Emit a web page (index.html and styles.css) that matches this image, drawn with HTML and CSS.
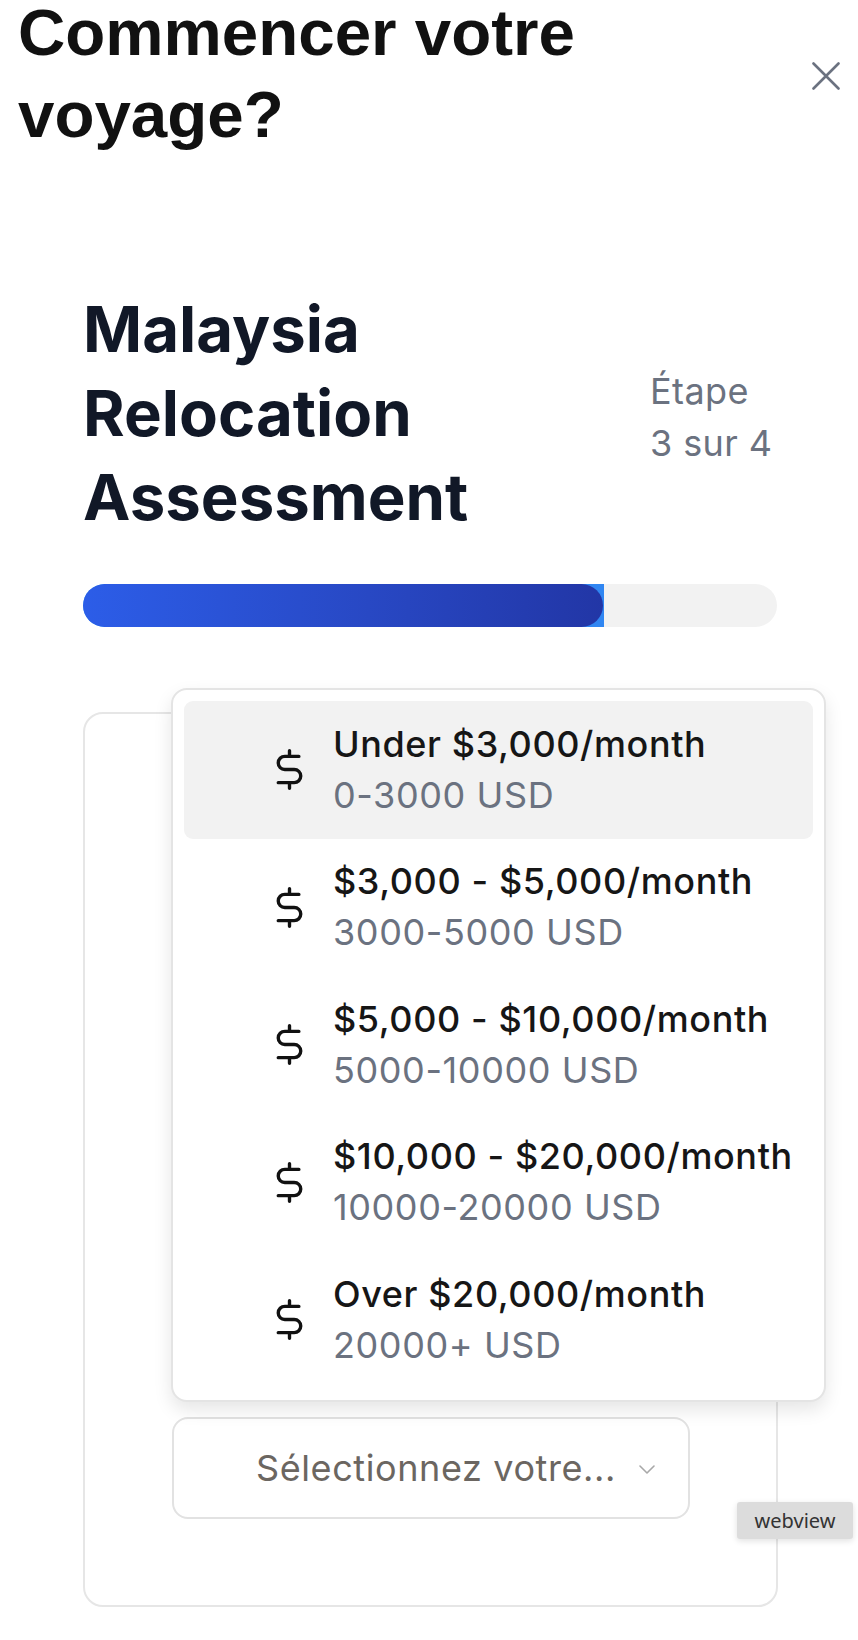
FILE: index.html
```html
<!DOCTYPE html>
<html lang="fr">
<head>
<meta charset="utf-8">
<title>Commencer votre voyage?</title>
<link rel="stylesheet" href="styles.css">
</head>
<body>
<header class="top">
  <h1 class="top-title">Commencer votre voyage?</h1>
  <button class="close" aria-label="Fermer">
    <svg width="28" height="28" viewBox="0 0 28 28" fill="none" stroke="currentColor" stroke-width="2.6" stroke-linecap="round"><path d="M1.5 1.5L26.5 26.5M26.5 1.5L1.5 26.5"/></svg>
  </button>
</header>

<main class="main">
  <div class="head-row">
    <h2 class="assess-title">Malaysia Relocation Assessment</h2>
    <div class="step"><span class="step-line">Étape</span><span class="step-line">3 sur 4</span></div>
  </div>

  <div class="track"><div class="fill" style="width:75%"><div class="fill-inner"></div></div></div>

  <section class="card">
    <div class="dropdown">
      <div class="opt is-active">
        <svg class="dollar" viewBox="0 0 24 24" fill="none" stroke="currentColor" stroke-width="1.8" stroke-linecap="round" stroke-linejoin="round"><path d="M12 2v3M12 19v3M17 5H9.5a3.5 3.5 0 0 0 0 7h5a3.5 3.5 0 0 1 0 7H6"/></svg>
        <div class="opt-text"><div class="opt-label">Under $3,000/month</div><div class="opt-sub">0-3000 USD</div></div>
      </div>
      <div class="opt">
        <svg class="dollar" viewBox="0 0 24 24" fill="none" stroke="currentColor" stroke-width="1.8" stroke-linecap="round" stroke-linejoin="round"><path d="M12 2v3M12 19v3M17 5H9.5a3.5 3.5 0 0 0 0 7h5a3.5 3.5 0 0 1 0 7H6"/></svg>
        <div class="opt-text"><div class="opt-label">$3,000 - $5,000/month</div><div class="opt-sub">3000-5000 USD</div></div>
      </div>
      <div class="opt">
        <svg class="dollar" viewBox="0 0 24 24" fill="none" stroke="currentColor" stroke-width="1.8" stroke-linecap="round" stroke-linejoin="round"><path d="M12 2v3M12 19v3M17 5H9.5a3.5 3.5 0 0 0 0 7h5a3.5 3.5 0 0 1 0 7H6"/></svg>
        <div class="opt-text"><div class="opt-label">$5,000 - $10,000/month</div><div class="opt-sub">5000-10000 USD</div></div>
      </div>
      <div class="opt">
        <svg class="dollar" viewBox="0 0 24 24" fill="none" stroke="currentColor" stroke-width="1.8" stroke-linecap="round" stroke-linejoin="round"><path d="M12 2v3M12 19v3M17 5H9.5a3.5 3.5 0 0 0 0 7h5a3.5 3.5 0 0 1 0 7H6"/></svg>
        <div class="opt-text"><div class="opt-label">$10,000 - $20,000/month</div><div class="opt-sub">10000-20000 USD</div></div>
      </div>
      <div class="opt">
        <svg class="dollar" viewBox="0 0 24 24" fill="none" stroke="currentColor" stroke-width="1.8" stroke-linecap="round" stroke-linejoin="round"><path d="M12 2v3M12 19v3M17 5H9.5a3.5 3.5 0 0 0 0 7h5a3.5 3.5 0 0 1 0 7H6"/></svg>
        <div class="opt-text"><div class="opt-label">Over $20,000/month</div><div class="opt-sub">20000+ USD</div></div>
      </div>
    </div>

    <div class="select">
      <span class="select-text">Sélectionnez votre...</span>
      <svg class="chev" width="16" height="9" viewBox="0 0 16 9" fill="none" stroke="currentColor" stroke-width="1.6" stroke-linecap="round" stroke-linejoin="round"><path d="M1 1l7 7 7-7"/></svg>
    </div>
  </section>
</main>

<div class="tag">webview</div>
</body>
</html>
```

FILE: styles.css
```css
* { box-sizing: border-box; }

body {
  margin: 0;
  background: #ffffff;
  font-family: Inter, "Noto Sans", sans-serif;
  position: relative;
  min-height: 1640px;
  overflow: hidden;
}

.top {
  display: flex;
  align-items: center;
  justify-content: space-between;
  padding: 0 18px 0 18px;
  margin-top: -8px;
}

.top-title {
  margin: 0;
  max-width: 610px;
  font-family: "Liberation Sans", Arial, sans-serif;
  font-weight: 700;
  font-size: 65.5px;
  line-height: 82px;
  color: #111111;
}

.close {
  border: 0;
  background: none;
  padding: 0;
  margin-top: 4px;
  color: #6b7280;
  display: flex;
}

.main {
  margin-left: 83px;
  width: 695px;
  padding-top: 131px;
}

.head-row {
  display: flex;
  align-items: center;
  justify-content: space-between;
}

.assess-title {
  margin: 0;
  max-width: 540px;
  font-weight: 700;
  font-size: 63.5px;
  line-height: 84px;
  color: #111827;
}

.step {
  display: flex;
  flex-direction: column;
  flex: none;
  margin: 7px 4px 0 0;
  width: 124px;
  white-space: nowrap;
  font-size: 36px;
  line-height: 52px;
  letter-spacing: 0.4px;
  color: #6b7280;
}

.track {
  margin-top: 45px;
  height: 43px;
  width: 694px;
  border-radius: 999px;
  background: #f2f2f2;
  overflow: hidden;
}

.fill {
  height: 100%;
  background: #3086f2;
}

.fill-inner {
  height: 100%;
  width: calc(100% - 1px);
  border-radius: 999px;
  background: linear-gradient(90deg, #2c5de8 0%, #2848c4 55%, #2236a6 100%);
}

.card {
  position: relative;
  margin-top: 85px;
  border: 2px solid #e6e6e6;
  border-radius: 20px;
  padding: 703px 85px 86px 87px;
}

.dropdown {
  position: absolute;
  left: 86px;
  top: -26px;
  width: 655px;
  padding: 11px;
  background: #ffffff;
  border: 2px solid #e4e4e4;
  border-radius: 16px;
  box-shadow: 0 8px 18px rgba(0, 0, 0, 0.10);
  z-index: 2;
}

.opt {
  height: 137.5px;
  display: flex;
  align-items: center;
  gap: 21px;
  padding-left: 83px;
  border-radius: 9px;
}

.opt.is-active {
  background: #f2f2f2;
}

.dollar {
  width: 45px;
  height: 45px;
  color: #111111;
  flex: none;
}

.opt-label {
  font-size: 36px;
  line-height: 51px;
  letter-spacing: 0.6px;
  font-weight: 500;
  color: #161616;
}

.opt-sub {
  font-size: 36px;
  line-height: 51px;
  letter-spacing: 0.6px;
  color: #6b7280;
}

.select {
  width: 518px;
  height: 102px;
  border: 2px solid #e2e2e2;
  border-radius: 16px;
  display: flex;
  align-items: center;
  padding-left: 82px;
  gap: 23px;
}

.select-text {
  font-size: 36px;
  letter-spacing: 0.6px;
  color: #6b6661;
}

.chev {
  color: #a8a8a8;
  margin-top: 2px;
}

.tag {
  position: absolute;
  left: 737px;
  top: 1502px;
  width: 116px;
  height: 37px;
  display: flex;
  align-items: center;
  justify-content: center;
  background: #dcdcdc;
  border-radius: 3px;
  box-shadow: 0 2px 6px rgba(0, 0, 0, 0.12);
  font-family: "Noto Sans", sans-serif;
  font-size: 20px;
  color: #333333;
}
```
